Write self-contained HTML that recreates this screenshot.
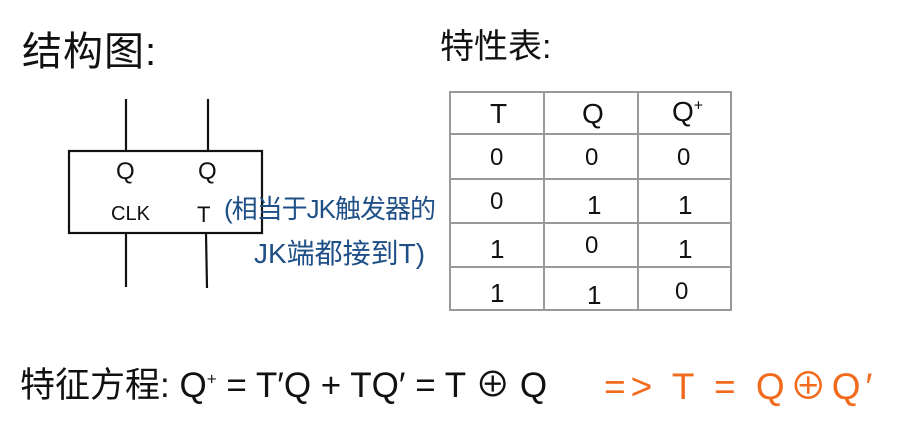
<!DOCTYPE html>
<html><head><meta charset="utf-8"><style>
html,body{margin:0;padding:0;background:#fff;width:902px;height:433px;overflow:hidden}
svg{position:absolute;left:0;top:0}
.t{position:absolute;font-family:"Liberation Sans","Noto Sans CJK SC",sans-serif;color:#111;white-space:nowrap;line-height:1}
</style></head><body>
<svg width="902" height="433">
<g stroke="#111" stroke-width="2.2" fill="none">
<rect x="69" y="151" width="193" height="82"/>
<line x1="126" y1="99" x2="126" y2="151"/><line x1="208" y1="99" x2="208" y2="151"/>
<line x1="126" y1="233" x2="126" y2="287"/><line x1="206" y1="233" x2="207" y2="288"/>
</g>
<g stroke="#999" stroke-width="2" fill="none">
<rect x="450" y="92" width="281" height="218"/>
<line x1="544" y1="92" x2="544" y2="310"/><line x1="638" y1="92" x2="638" y2="310"/>
<line x1="450" y1="134" x2="731" y2="134"/><line x1="450" y1="179" x2="731" y2="179"/>
<line x1="450" y1="223" x2="731" y2="223"/><line x1="450" y1="267" x2="731" y2="267"/>
</g>
</svg>
<div class="t" style="left:22px;top:32px;font-size:40px;letter-spacing:1px">结构图:</div>
<div class="t" style="left:440px;top:30px;font-size:34px">特性表:</div>
<div class="t" style="left:116px;top:160px;font-size:24px">Q</div>
<div class="t" style="left:198px;top:160px;font-size:24px">Q</div>
<div class="t" style="left:111px;top:204px;font-size:20px">CLK</div>
<div class="t" style="left:197px;top:204px;font-size:22px">T</div>
<div class="t" style="left:224px;top:196px;font-size:26px;color:#1e4f86;letter-spacing:-1px">(相当于JK触发器的</div>
<div class="t" style="left:254px;top:240px;font-size:28px;color:#1e4f86">JK端都接到T)</div>
<div class="t" style="left:490px;top:100px;font-size:28px">T</div>
<div class="t" style="left:582px;top:100px;font-size:28px">Q</div>
<div class="t" style="left:672px;top:98px;font-size:28px">Q<sup style="font-size:16px">+</sup></div>
<div class="t" style="left:490px;top:146px;font-size:24px">0</div><div class="t" style="left:585px;top:146px;font-size:24px">0</div><div class="t" style="left:677px;top:146px;font-size:24px">0</div>
<div class="t" style="left:490px;top:190px;font-size:24px">0</div><div class="t" style="left:587px;top:192px;font-size:26px">1</div><div class="t" style="left:678px;top:192px;font-size:26px">1</div>
<div class="t" style="left:490px;top:236px;font-size:26px">1</div><div class="t" style="left:585px;top:234px;font-size:24px">0</div><div class="t" style="left:678px;top:236px;font-size:26px">1</div>
<div class="t" style="left:490px;top:280px;font-size:26px">1</div><div class="t" style="left:587px;top:282px;font-size:26px">1</div><div class="t" style="left:675px;top:280px;font-size:24px">0</div>
<div class="t" style="left:20px;top:368px;font-size:35px">特征方程: Q<sup style="font-size:17px">+</sup> = T′Q + TQ′ = T ⊕ Q</div>
<div class="t" style="left:604px;top:368px;font-size:37px;color:#f26a1b;letter-spacing:5px">=&gt; T = Q⊕Q′</div>
</body></html>
